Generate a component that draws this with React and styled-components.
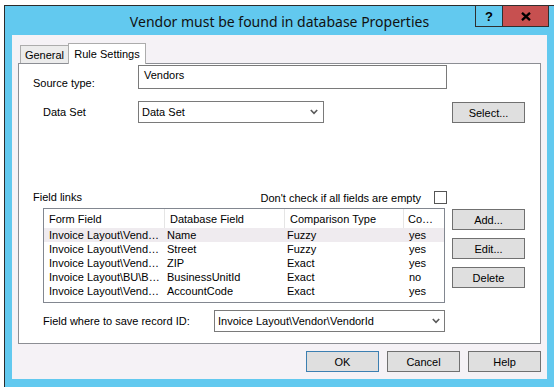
import React from 'react';
import styled, { createGlobalStyle } from 'styled-components';

const Global = createGlobalStyle`
  html, body { margin: 0; padding: 0; width: 557px; height: 387px; overflow: hidden; background: #ffffff; }
  body { font-family: "Liberation Sans", Arial, sans-serif; font-size: 11px; color: #000; }
  #root { width: 557px; height: 387px; }
  * { box-sizing: border-box; }
`;

const Desktop = styled.div`
  width: 557px;
  height: 387px;
  padding: 5px 0 0 4px;
  overflow: hidden;
`;

const Window = styled.div`
  position: relative;
  width: 550px;
  height: 400px;
  border-left: 1px solid #2b2b2b;
  border-top: 1px solid #2b2b2b;
  background: #62c9ef;
  padding: 0 7px;
  display: flex;
  flex-direction: column;
`;

const TitleBar = styled.div`
  height: 29px;
  display: flex;
  align-items: center;
  justify-content: center;
  padding-top: 1px;
  font-family: "Noto Sans", "Open Sans", sans-serif;
  font-size: 14px;
  color: #111;
`;

const CaptionButtons = styled.div`
  position: absolute;
  top: -1px;
  right: 5px;
  display: flex;
  height: 22px;
  border: 1px solid #2f2f2f;
`;

const CaptionButton = styled.div`
  width: ${p => p.$w}px;
  height: 100%;
  display: flex;
  align-items: center;
  justify-content: center;
  background: ${p => p.$bg};
  border-left: ${p => (p.$divider ? '1px solid #2f2f2f' : 'none')};
  font-family: "Liberation Sans", Arial, sans-serif;
  font-weight: bold;
  font-size: 13px;
  color: #000;
`;

const Client = styled.div`
  height: 344px;
  background: #f5f2f6;
  padding: 8px 6px 0;
  display: flex;
  flex-direction: column;
`;

const TabStrip = styled.div`
  height: 20px;
  display: flex;
  align-items: flex-end;
  padding-left: 2px;
  position: relative;
  z-index: 1;
`;

const Tab = styled.div`
  height: ${p => (p.$active ? 21 : 18)}px;
  width: ${p => p.$w}px;
  margin-left: ${p => (p.$active ? -1 : 0)}px;
  margin-bottom: ${p => (p.$active ? -1 : 0)}px;
  border: 1px solid #acacac;
  border-bottom: none;
  background: ${p => (p.$active ? '#ffffff' : '#ececec')};
  display: flex;
  align-items: center;
  justify-content: center;
  padding-top: ${p => (p.$active ? 0 : 1)}px;
  position: relative;
  z-index: ${p => (p.$active ? 2 : 1)};
`;

const Panel = styled.div`
  height: 281px;
  border: 1px solid #8c8e94;
  background: #ffffff;
  display: flex;
  flex-direction: column;
`;

const Row = styled.div`
  display: flex;
  align-items: ${p => p.$align || 'center'};
  margin-top: ${p => p.$mt}px;
  height: ${p => p.$h}px;
`;

const Label = styled.div`
  margin-left: ${p => p.$ml}px;
  width: ${p => p.$w}px;
  padding-top: ${p => p.$pt || 0}px;
  line-height: 13px;
  white-space: nowrap;
`;

const TextBox = styled.div`
  width: ${p => p.$w}px;
  height: 100%;
  border: 1px solid #7a7a7a;
  background: #fff;
  padding: 3px 5px;
  line-height: 13px;
`;

const Combo = styled.div`
  width: ${p => p.$w}px;
  height: 100%;
  border: 1px solid #7a7a7a;
  background: #fff;
  display: flex;
  align-items: center;
  justify-content: space-between;
  padding: 0 ${p => p.$pr}px 0 3px;
  white-space: nowrap;
`;

const Button = styled.div`
  width: 73px;
  height: 21px;
  flex: none;
  border: 1px solid ${p => (p.$default ? '#3c7fb1' : '#707070')};
  background: #dfdfdf;
  display: flex;
  align-items: center;
  justify-content: center;
  margin-left: ${p => p.$ml || 0}px;
  margin-top: ${p => p.$mt || 0}px;
`;

const Spacer = styled.div`
  flex: 1;
`;

const CheckBox = styled.div`
  width: 13px;
  height: 13px;
  border: 1px solid #555;
  background: #fff;
  margin-left: 13px;
  margin-right: 93px;
`;

const ListView = styled.div`
  margin-left: 24px;
  width: 402px;
  height: 95px;
  border: 1px solid #828790;
  background: #fff;
  overflow: hidden;
`;

const Grid = styled.div`
  display: grid;
  grid-template-columns: 121px 120px 119px 1fr;
`;

const HeaderCell = styled.div`
  height: 19px;
  display: flex;
  align-items: center;
  padding-left: ${p => p.$pl}px;
  border-right: ${p => (p.$last ? 'none' : '1px solid #e5e5e5')};
  white-space: nowrap;
  overflow: hidden;
`;

const Cell = styled.div`
  height: 14px;
  line-height: 14px;
  padding-left: ${p => p.$pl}px;
  background: ${p => (p.$hl ? '#efebef' : 'transparent')};
  white-space: nowrap;
  overflow: hidden;
`;

const ButtonColumn = styled.div`
  display: flex;
  flex-direction: column;
  gap: 8px;
  margin-left: 7px;
  padding-top: 1px;
`;

const Footer = styled.div`
  display: flex;
  justify-content: flex-end;
  gap: 8px;
  margin-top: 7px;
`;

const Chevron = () => (
  <svg width="8" height="6" viewBox="0 0 8 6">
    <polyline points="0.8,1 4,4.4 7.2,1" fill="none" stroke="#5a5a5a" strokeWidth="1.6" />
  </svg>
);

const CloseGlyph = () => (
  <svg width="10" height="9" viewBox="0 0 10 9">
    <path d="M1 0.8 L9 8.2 M9 0.8 L1 8.2" stroke="#000" strokeWidth="2.3" />
  </svg>
);

const columns = [
  { title: 'Form Field', hpl: 5, pl: 5 },
  { title: 'Database Field', hpl: 5, pl: 2 },
  { title: 'Comparison Type', hpl: 5, pl: 2 },
  { title: 'Co…', hpl: 4, pl: 5 },
];

const rows = [
  ['Invoice Layout\\Vend…', 'Name', 'Fuzzy', 'yes'],
  ['Invoice Layout\\Vend…', 'Street', 'Fuzzy', 'yes'],
  ['Invoice Layout\\Vend…', 'ZIP', 'Exact', 'yes'],
  ['Invoice Layout\\BU\\B…', 'BusinessUnitId', 'Exact', 'no'],
  ['Invoice Layout\\Vend…', 'AccountCode', 'Exact', 'yes'],
];

export default function App() {
  return (
    <Desktop>
      <Global />
      <Window>
        <TitleBar>Vendor must be found in database Properties</TitleBar>
        <CaptionButtons>
          <CaptionButton $w={26} $bg="#62c9ef">?</CaptionButton>
          <CaptionButton $w={46} $bg="#c75050" $divider>
            <CloseGlyph />
          </CaptionButton>
        </CaptionButtons>
        <Client>
          <TabStrip>
            <Tab $w={49}>General</Tab>
            <Tab $w={78} $active>Rule Settings</Tab>
          </TabStrip>
          <Panel>
            <Row $mt={1} $h={24} $align="stretch">
              <Label $ml={14} $w={105} $pt={12}>Source type:</Label>
              <TextBox $w={309}>Vendors</TextBox>
            </Row>
            <Row $mt={12} $h={22}>
              <Label $ml={24} $w={95}>Data Set</Label>
              <Combo $w={186} $pr={5}>
                <span>Data Set</span>
                <Chevron />
              </Combo>
              <Button $ml={128} $mt={1}>Select...</Button>
            </Row>
            <Row $mt={67} $h={15}>
              <Label $ml={14} $w={80}>Field links</Label>
              <Spacer />
              <span>Don't check if all fields are empty</span>
              <CheckBox />
            </Row>
            <Row $mt={3} $h={95} $align="flex-start">
              <ListView>
                <Grid>
                  {columns.map((c, i) => (
                    <HeaderCell key={c.title} $pl={c.hpl} $last={i === columns.length - 1}>
                      {c.title}
                    </HeaderCell>
                  ))}
                  {rows.map((r, ri) =>
                    r.map((v, ci) => (
                      <Cell key={ri + '-' + ci} $pl={columns[ci].pl} $hl={ri === 0}>
                        {v}
                      </Cell>
                    ))
                  )}
                </Grid>
              </ListView>
              <ButtonColumn>
                <Button>Add...</Button>
                <Button>Edit...</Button>
                <Button>Delete</Button>
              </ButtonColumn>
            </Row>
            <Row $mt={7} $h={22}>
              <Label $ml={24} $w={171}>Field where to save record ID:</Label>
              <Combo $w={231} $pr={4}>
                <span>Invoice Layout\Vendor\VendorId</span>
                <Chevron />
              </Combo>
            </Row>
          </Panel>
          <Footer>
            <Button $default>OK</Button>
            <Button>Cancel</Button>
            <Button>Help</Button>
          </Footer>
        </Client>
      </Window>
    </Desktop>
  );
}
